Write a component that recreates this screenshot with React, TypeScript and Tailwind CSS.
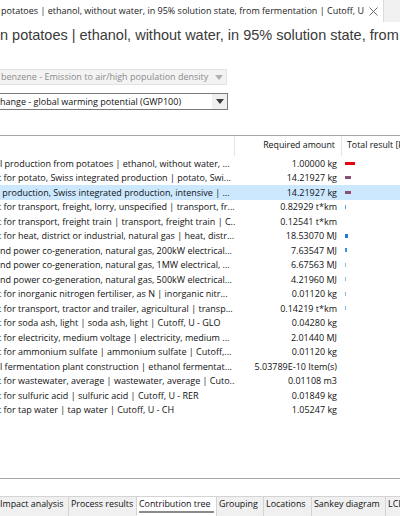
import React from "react";

type Row = {
  name: string;
  amount: string;
  shift: string;
  bar?: string;
  selected?: boolean;
};

const rows: Row[] = [
  { name: "l production from potatoes | ethanol, without water, ...", amount: "1.00000 kg", shift: "ml-0", bar: "w-[10px] h-[3px] bg-[#e8000e]" },
  { name: "t for potato, Swiss integrated production | potato, Swi...", amount: "14.21927 kg", shift: "-ml-[2px]", bar: "w-[6px] h-[3px] bg-[#8a4f73]" },
  { name: " production, Swiss integrated production, intensive | ...", amount: "14.21927 kg", shift: "ml-0", bar: "w-[6px] h-[3px] bg-[#8a4f73]", selected: true },
  { name: "t for transport, freight, lorry, unspecified | transport, fr...", amount: "0.82929 t*km", shift: "-ml-[2px]", bar: "w-px h-[4px] bg-[#5a9ee0]" },
  { name: "t for transport, freight train | transport, freight train | C...", amount: "0.12541 t*km", shift: "-ml-[2px]" },
  { name: "t for heat, district or industrial, natural gas | heat, distr...", amount: "18.53070 MJ", shift: "-ml-[2px]", bar: "w-[3px] h-[4px] bg-[#1f7ad6]" },
  { name: "nd power co-generation, natural gas, 200kW electrical...", amount: "7.63547 MJ", shift: "ml-0", bar: "w-[2px] h-[4px] bg-[#3b8de0]" },
  { name: "nd power co-generation, natural gas, 1MW electrical, ...", amount: "6.67563 MJ", shift: "ml-0", bar: "w-px h-[4px] bg-[#8bb8e8]" },
  { name: "nd power co-generation, natural gas, 500kW electrical...", amount: "4.21960 MJ", shift: "ml-0", bar: "w-px h-[4px] bg-[#8bb8e8]" },
  { name: "t for inorganic nitrogen fertiliser, as N | inorganic nitr...", amount: "0.01120 kg", shift: "-ml-[2px]", bar: "w-px h-[4px] bg-[#8bb8e8]" },
  { name: "t for transport, tractor and trailer, agricultural | transp...", amount: "0.14219 t*km", shift: "-ml-[2px]", bar: "w-px h-[4px] bg-[#8bb8e8]" },
  { name: "t for soda ash, light | soda ash, light | Cutoff, U - GLO", amount: "0.04280 kg", shift: "-ml-[2px]" },
  { name: "t for electricity, medium voltage | electricity, medium ...", amount: "2.01440 MJ", shift: "-ml-[2px]" },
  { name: "t for ammonium sulfate | ammonium sulfate | Cutoff,...", amount: "0.01120 kg", shift: "-ml-[2px]" },
  { name: "l fermentation plant construction | ethanol fermentat...", amount: "5.03789E-10 Item(s)", shift: "ml-0" },
  { name: "t for wastewater, average | wastewater, average | Cuto...", amount: "0.01108 m3", shift: "-ml-[2px]" },
  { name: "t for sulfuric acid | sulfuric acid | Cutoff, U - RER", amount: "0.01849 kg", shift: "-ml-[2px]" },
  { name: "t for tap water | tap water | Cutoff, U - CH", amount: "1.05247 kg", shift: "-ml-[2px]" },
];

const tabs = [
  { label: "Impact analysis", w: "w-[71px]" },
  { label: "Process results", w: "w-[68px]" },
  { label: "Contribution tree", w: "w-[80px]", active: true },
  { label: "Grouping", w: "w-[47px]" },
  { label: "Locations", w: "w-[48px]" },
  { label: "Sankey diagram", w: "w-[74px]" },
  { label: "LCI results", w: "w-[60px]" },
];

function Arrow({ color }: { color: string }) {
  return (
    <svg width="8" height="5" viewBox="0 0 8 5">
      <path d="M0 0 L8 0 L4 5 Z" fill={color} />
    </svg>
  );
}

export default function App() {
  return (
    <div className="w-[400px] h-[516px] bg-white overflow-hidden flex flex-col font-['Open_Sans','Noto_Sans',sans-serif] text-[9px] text-[#111]">
      {/* editor tab strip */}
      <div className="h-[22px] flex bg-[#f0f0f0] shrink-0">
        <div className="w-[384px] bg-white border-r border-[#dadada] flex items-center justify-between pl-px pr-[5px] text-[9px] text-[#1a1a1a]">
          <span className="whitespace-nowrap">
            potatoes | ethanol, without water, in 95% solution state, from fermentation | Cutoff, U
          </span>
          <svg width="9" height="9" viewBox="0 0 9 9" className="shrink-0">
            <path d="M0.5 0.5 L8.5 8.5 M8.5 0.5 L0.5 8.5" stroke="#6a6a6a" strokeWidth="1" />
          </svg>
        </div>
      </div>

      {/* title */}
      <div className="h-[28px] pt-[5px] whitespace-nowrap overflow-hidden font-['Liberation_Sans',Arial,sans-serif] text-[14.5px] leading-[17px] text-[#3a3a3a] shrink-0">
        n potatoes | ethanol, without water, in 95% solution state, from fermentation | Cutoff, U - CH
      </div>

      {/* selectors */}
      <div className="flex flex-col gap-[8px] pt-[19px] shrink-0">
        <div className="w-[227px] h-[16px] flex items-center justify-between bg-[#f3f3f3] border border-l-0 border-[#e2e2e2] pl-px text-[#8c8c8c]">
          <span className="whitespace-nowrap">benzene - Emission to air/high population density</span>
          <span className="w-[15px] h-full flex items-center justify-center">
            <Arrow color="#b0b0b0" />
          </span>
        </div>
        <div className="w-[228px] h-[17px] flex items-center justify-between bg-white border border-l-0 border-[#7a7a7a] text-[#111]">
          <span className="whitespace-nowrap">hange - global warming potential (GWP100)</span>
          <span className="w-[15px] h-full flex items-center justify-center bg-[#f0f0f0]">
            <Arrow color="#3c3c3c" />
          </span>
        </div>
      </div>

      {/* contribution table */}
      <div className="mt-[25px] border-t border-[#a6a6a6] shrink-0">
        <div className="grid grid-cols-[235px_107px_1fr] h-[20px] items-center text-[8.8px]">
          <div className="h-full border-r border-[#e6e6e6]" />
          <div className="h-full flex items-center justify-end pr-[6px] border-r border-[#e6e6e6] whitespace-nowrap">
            Required amount
          </div>
          <div className="pl-[5px] whitespace-nowrap overflow-hidden">Total result [kg CO2 eq]</div>
        </div>
        {rows.map((r, i) => (
          <div
            key={i}
            className={`grid grid-cols-[235px_107px_1fr] h-[14.5px] items-center ${r.selected ? "bg-[#cce8ff]" : ""}`}
          >
            <div className="overflow-hidden whitespace-nowrap pr-[2px]">
              <span className={`block whitespace-pre ${r.shift}`}>{r.name}</span>
            </div>
            <div className="text-right pr-[5px] whitespace-nowrap">{r.amount}</div>
            <div className="pl-[3px] flex items-center">
              {r.bar && <div className={r.bar} />}
            </div>
          </div>
        ))}
      </div>

      {/* empty area */}
      <div className="flex-1" />
      <div className="border-t border-[#a6a6a6] h-[18px] shrink-0" />

      {/* result tabs */}
      <div className="h-[20px] flex shrink-0 -ml-[2px] text-[8.9px]">
        {tabs.map((t) => (
          <div
            key={t.label}
            className={`${t.w} shrink-0 h-full flex flex-col border-t border-r border-[#d4d4d4] overflow-hidden ${t.active ? "bg-white" : "bg-[#f0f0f0]"}`}
          >
            <div className="flex-1 flex items-center pl-[2px] whitespace-nowrap">{t.label}</div>
            {t.active ? <div className="h-[2px] mx-[2px] mb-[3px] bg-[#8a8a8a]" /> : <div className="h-[5px]" />}
          </div>
        ))}
      </div>
    </div>
  );
}
